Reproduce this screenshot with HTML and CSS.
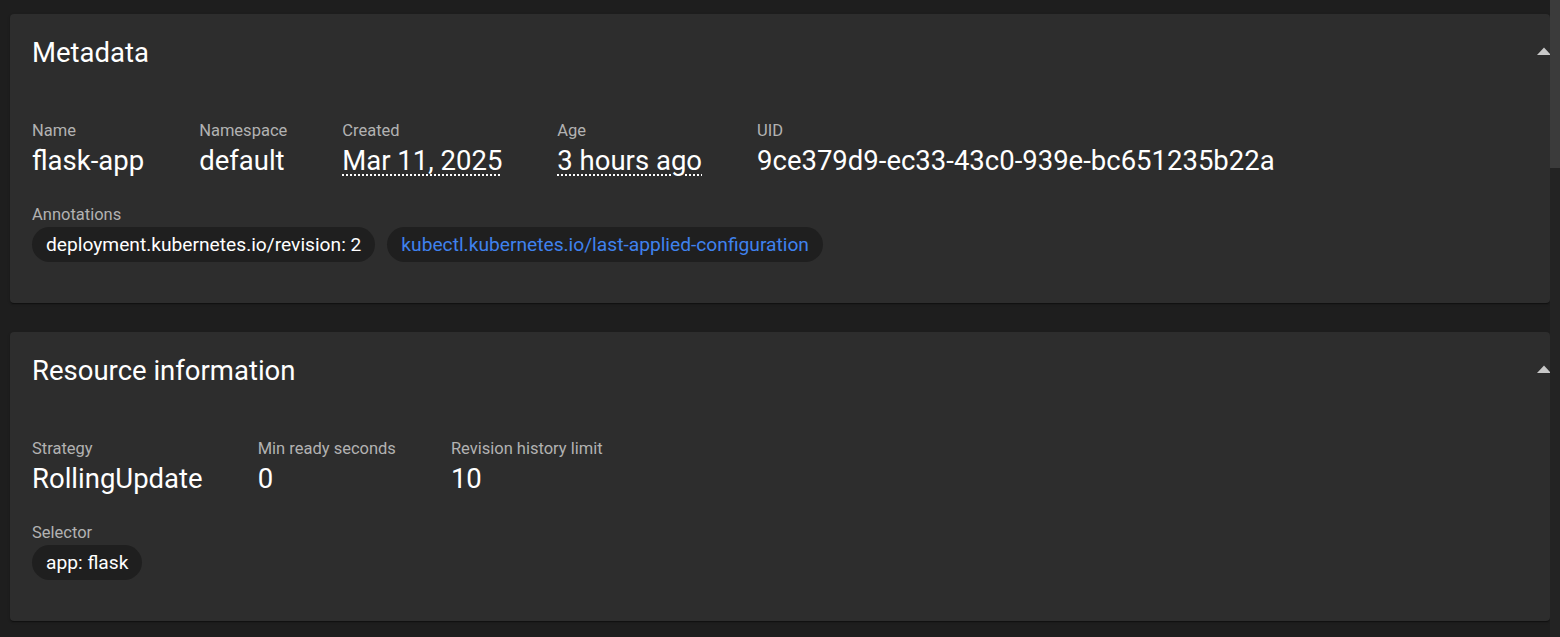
FILE: index.html
```html
<!DOCTYPE html>
<html lang="en">
<head>
<meta charset="utf-8">
<title>Deployment details</title>
<link rel="stylesheet" href="styles.css">
</head>
<body>
<div class="app">
  <main class="content">
    <section class="card">
      <header class="card-header">
        <h2 class="card-title">Metadata</h2>
        <svg class="collapse-icon" width="14" height="8" viewBox="0 0 14 8" aria-hidden="true"><polygon points="0,8 7,0.5 14,8" fill="#c8c8c8"/></svg>
      </header>
      <div class="card-body">
        <div class="fields">
          <div class="field"><div class="label">Name</div><div class="value">flask-app</div></div>
          <div class="field"><div class="label">Namespace</div><div class="value">default</div></div>
          <div class="field"><div class="label">Created</div><div class="value"><span class="dotted">Mar 11, 2025</span></div></div>
          <div class="field"><div class="label">Age</div><div class="value"><span class="dotted">3 hours ago</span></div></div>
          <div class="field"><div class="label">UID</div><div class="value">9ce379d9-ec33-43c0-939e-bc651235b22a</div></div>
        </div>
        <div class="chip-field">
          <div class="label">Annotations</div>
          <div class="chips">
            <span class="chip">deployment.kubernetes.io/revision: 2</span>
            <span class="chip chip-link">kubectl.kubernetes.io/last-applied-configuration</span>
          </div>
        </div>
      </div>
    </section>

    <section class="card">
      <header class="card-header">
        <h2 class="card-title">Resource information</h2>
        <svg class="collapse-icon" width="14" height="8" viewBox="0 0 14 8" aria-hidden="true"><polygon points="0,8 7,0.5 14,8" fill="#c8c8c8"/></svg>
      </header>
      <div class="card-body">
        <div class="fields">
          <div class="field"><div class="label">Strategy</div><div class="value">RollingUpdate</div></div>
          <div class="field"><div class="label">Min ready seconds</div><div class="value">0</div></div>
          <div class="field"><div class="label">Revision history limit</div><div class="value">10</div></div>
        </div>
        <div class="chip-field">
          <div class="label">Selector</div>
          <div class="chips">
            <span class="chip">app: flask</span>
          </div>
        </div>
      </div>
    </section>
  </main>
  <div class="scrollbar"><div class="scroll-thumb"></div></div>
</div>
</body>
</html>
```

FILE: styles.css
```css
html, body {
  margin: 0;
  padding: 0;
  height: 100%;
  background: #1e1e1e;
  font-family: Roboto, "Liberation Sans", Arial, sans-serif;
  color: #ffffff;
  overflow: hidden;
}

.app {
  display: flex;
  height: 637px;
}

.content {
  flex: 1;
  min-width: 0;
  overflow: hidden;
  padding: 14px 0 0 10px;
  display: flex;
  flex-direction: column;
  gap: 29px;
}

.card {
  background: #2d2d2d;
  border-radius: 4px;
  box-shadow: 0 2px 1px -1px rgba(0,0,0,0.25), 0 1px 1px 0 rgba(0,0,0,0.2), 0 1px 3px 0 rgba(0,0,0,0.15);
  padding: 23px 0 0 22px;
  height: 289px;
  box-sizing: border-box;
}

.card-header {
  display: flex;
  align-items: center;
  justify-content: space-between;
  height: 32px;
}

.card-title {
  margin: 0;
  font-size: 27.5px;
  line-height: 32px;
  font-weight: 400;
}

.collapse-icon {
  display: block;
  margin-right: -1px;
  margin-top: -5px;
}

.card-body {
  padding-top: 52px;
}

.fields {
  display: flex;
  gap: 55px;
}

.label {
  font-size: 16.5px;
  line-height: 20px;
  color: #b2b2b2;
}

.value {
  font-size: 27.5px;
  line-height: 32px;
  margin-top: 4px;
  white-space: nowrap;
}

.dotted {
  text-decoration: underline dotted 2px;
  text-underline-offset: 4px;
}

.chip-field {
  margin-top: 28px;
}

.chips {
  display: flex;
  gap: 12px;
  margin-top: 2px;
}

.chip {
  display: inline-flex;
  align-items: center;
  height: 35px;
  padding: 0 14px;
  border-radius: 18px;
  background: #1f1f1f;
  font-size: 19.2px;
  color: #ffffff;
  white-space: nowrap;
}

.chip-link {
  color: #3f82ee;
}

.scrollbar {
  width: 10px;
  flex: none;
  background: #232323;
}

.scroll-thumb {
  height: 168px;
  background: #3b3b3b;
}
```
